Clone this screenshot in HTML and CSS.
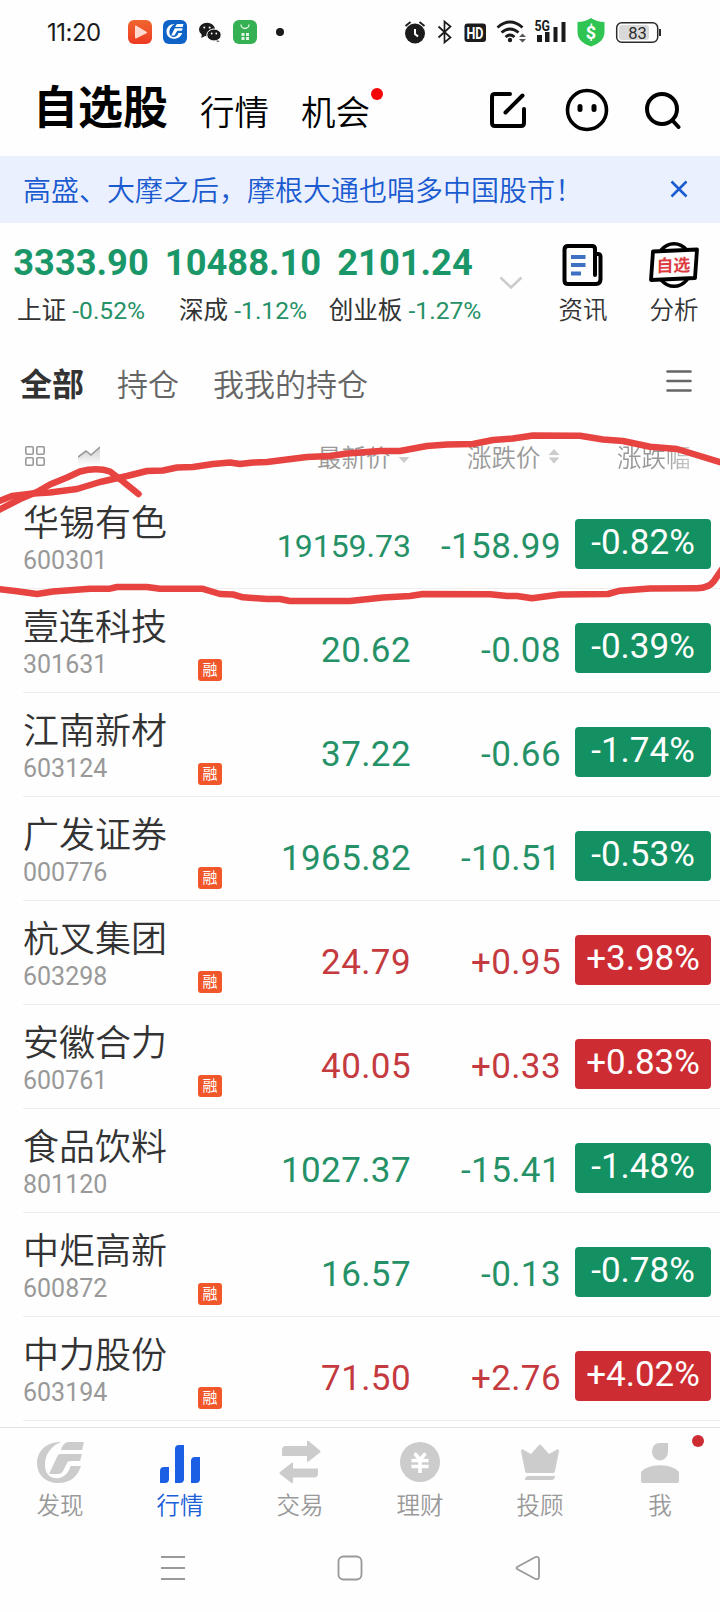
FILE: index.html
```html
<!DOCTYPE html>
<html lang="zh-CN">
<head>
  <meta charset="UTF-8" />
  <title>自选股</title>
  <link rel="stylesheet" href="styles.css">
</head>
<body>
  <div class="status-bar">
    <span class="time">11:20</span>
    <div class="app-icons">
      <svg width="24" height="24" viewBox="0 0 24 24"><defs><linearGradient id="gr" x2="0" y2="1"><stop stop-color="#f0662f"/><stop offset="1" stop-color="#ee3a22"/></linearGradient></defs><rect width="24" height="24" rx="6" fill="url(#gr)"/><path d="M7 6.500v11q0 1.500 1.500.8l10-5q1.300-.8 0-1.600l-10-6Q7 5.200 7 6.500z" fill="#ffd9cf"/></svg>
      <svg width="24" height="24" viewBox="0 0 24 24"><rect width="24" height="24" rx="6" fill="#0f63c6"/><g transform="translate(3.500 4) scale(.36)" fill="#fff"><path d="M24 0C8 0 0 10 0 21c0 12 9 20 20 20 14 0 21-8 24-16H33c-1 5-4 9-11 11-8 1-14-4-14-13C8 12 15 4 24 0z"/><path d="M29 0h18l-2 8H24z"/><path d="M23 12h22l-2 7H30l-8 13h-9z"/></g></svg>
      <svg width="24" height="24" viewBox="0 0 24 24"><ellipse cx="9" cy="9.500" rx="8" ry="6.700" fill="#1b1b1b"/><path d="M4 14l-.8 4 4-2zM19 19l2.500 3-4-1z" fill="#1b1b1b"/><ellipse cx="16" cy="15" rx="7.200" ry="6" fill="#1b1b1b" stroke="#fff"/><g fill="#fff"><circle cx="6.300" cy="7.500" r="1"/><circle cx="11.600" cy="7.500" r="1"/><circle cx="13.700" cy="13.500" r=".9"/><circle cx="18.300" cy="13.500" r=".9"/></g></svg>
      <svg width="24" height="24" viewBox="0 0 24 24"><rect width="24" height="24" rx="6" fill="#35b053"/><path d="M8 4.500a4 4 0 0 0 8 0" fill="none" stroke="#dff5e4" stroke-width="1.400"/><path d="M8.500 13h3v3h-3zM13 13h3v3h-3zM8.500 17h3v3h-3zM13 17h3v3h-3z" fill="#dff5e4"/></svg>
    </div>
    <span class="more-dot"></span>
    <svg class="sys-icons" width="260" height="32" viewBox="402 16 260 32">
      <g fill="#1b1b1b">
        <circle cx="416" cy="33.500" r="10"/>
        <path d="M416 29v5l3 2.500" fill="none" stroke="#fff" stroke-width="2"/>
        <path d="M406.500 26l5-4M425.500 26l-5-4" stroke="#1b1b1b" stroke-width="1.800"/>
        <path d="M439.500 26.500l12 11-6 5V21.500l6 5-12 11" fill="none" stroke="#1b1b1b" stroke-width="1.700"/>
        <rect x="465.500" y="23.500" width="21.500" height="18.500" rx="3"/>
        <g fill="none" stroke="#1b1b1b" stroke-width="2.800"><path d="M498.500 27.500q12.500-11 25 0M502.500 32.500q8.500-7 17 0M506.500 37q4.500-4 9 0"/></g>
        <circle cx="511" cy="40" r="2.200"/>
        <path d="M520 37l3.500-3.500 3.500 3.500zM520 39l3.500 3.500 3.500-3.500z" fill="#555"/>
        <path d="M538 35h5v7h-5zM546 32h4.500v10H546zM554.500 27h4v15h-4zM562.500 22h4v20h-4z"/>
      </g>
      <text x="467.500" y="38.500" font-size="16" font-weight="700" fill="#fff" textLength="17" lengthAdjust="spacingAndGlyphs">HD</text>
      <text x="535.500" y="31" font-size="14.500" font-weight="700" fill="#1b1b1b" textLength="15.500" lengthAdjust="spacingAndGlyphs">5G</text>
      <path d="M592 18q6 4 13.500 4V32q0 10-13.500 14.500Q578.500 42 578.500 32V22Q586 22 592 18z" fill="#30c552"/>
      <text x="592" y="39" font-size="18" font-weight="700" fill="#fff" text-anchor="middle">$</text>
      <rect x="617.700" y="22.700" width="41" height="19.500" rx="5" fill="#fff" stroke="#2b2b2b" stroke-width="1.500"/>
      <rect x="620" y="25" width="30" height="15" rx="3" fill="#d9d9d9"/>
      <path d="M661 29v7" stroke="#2b2b2b" stroke-width="2"/>
      <text x="638.500" y="38.500" font-size="16.500" fill="#2b2b2b" text-anchor="middle">83</text>
    </svg>
  </div>

  <header class="header">
    <h1>自选股</h1>
    <span class="head-link">行情</span>
    <span class="head-link">机会<i class="red-dot"></i></span>
    <div class="head-icons">
      <svg width="36" height="36" viewBox="0 0 36 36" fill="none" stroke="#000" stroke-width="4" stroke-linecap="round"><path d="M20 2H5Q2 2 2 5v26q0 3 3 3h26q3 0 3-3V17M15.500 20.500L32.500 3.500"/></svg>
      <svg width="44" height="44" viewBox="0 0 44 44"><circle cx="22" cy="22" r="19.500" fill="none" stroke="#000" stroke-width="3.600"/><rect x="12.500" y="16" width="5" height="8" rx="2.500"/><rect x="26.500" y="16" width="5" height="8" rx="2.500"/></svg>
      <svg class="search" width="38" height="38" viewBox="0 0 38 38" fill="none" stroke="#000" stroke-width="4" stroke-linecap="round"><circle cx="18" cy="18" r="15"/><path d="M28.500 29.500l6 6.500"/></svg>
    </div>
  </header>

  <div class="notice">
    <span>高盛、大摩之后，摩根大通也唱多中国股市！</span>
    <svg width="18" height="18" viewBox="0 0 18 18" stroke="#1a5bd0" stroke-width="2.600"><path d="M1.500 1.500l15 15M16.500 1.500l-15 15"/></svg>
  </div>

  <section class="market">
    <div class="index">
      <strong>3333.90</strong>
      <p>上证 <em>-0.52%</em></p>
    </div>
    <div class="index">
      <strong>10488.10</strong>
      <p>深成 <em>-1.12%</em></p>
    </div>
    <div class="index">
      <strong>2101.24</strong>
      <p>创业板 <em>-1.27%</em></p>
    </div>
    <svg class="chevron" width="24" height="14" viewBox="0 0 24 14" fill="none" stroke="#ccc" stroke-width="2.600"><path d="M1.500 1.500L12 11.500l10.500-10"/></svg>
    <div class="tool">
      <svg width="50" height="46" viewBox="0 0 50 46"><path d="M37 12h3q2.500 0 2.500 3v18M37 12v21M37 12V7q0-3-3-3H10Q6.500 4 6.500 7.500v31Q6.500 42 10 42h28q4.500 0 4.500-5v-6" fill="none" stroke="#000" stroke-width="4" stroke-linecap="round"/><path d="M13 15h14.500M13 23h14.500M13 31.500h10" stroke="#3e70c4" stroke-width="4.200"/></svg>
      <span>资讯</span>
    </div>
    <div class="tool">
      <svg width="50" height="46" viewBox="0 0 50 46"><ellipse cx="25" cy="23" rx="18" ry="21.300" fill="#fff" stroke="#000" stroke-width="3.400"/><path d="M4 9.500L48 7.500 46 36 2 38z" fill="#fff" stroke="#000" stroke-width="3.800" stroke-linejoin="round"/><text x="25.500" y="29.500" class="stamp" text-anchor="middle" transform="rotate(-2 25 23) skewX(-3)">自选</text></svg>
      <span>分析</span>
    </div>
  </section>

  <nav class="groups">
    <span class="active">全部</span>
    <span>持仓</span>
    <span>我我的持仓</span>
    <svg width="26" height="22" viewBox="0 0 26 22" stroke="#666" stroke-width="2.600" stroke-linecap="round"><path d="M1.500 1.500h23M1.500 11h23M1.500 20.500h23"/></svg>
  </nav>

  <div class="columns">
    <svg width="20" height="20" viewBox="0 0 20 20" fill="none" stroke="#999" stroke-width="1.600"><rect x=".8" y=".8" width="7.400" height="7.400" rx="1"/><rect x="11.800" y=".8" width="7.400" height="7.400" rx="1"/><rect x=".8" y="11.800" width="7.400" height="7.400" rx="1"/><rect x="11.800" y="11.800" width="7.400" height="7.400" rx="1"/></svg>
    <svg class="trend" width="22" height="20" viewBox="0 0 22 20"><defs><linearGradient id="fade" x2="0" y2="1"><stop stop-color="#ccc"/><stop offset="1" stop-color="#fff"/></linearGradient></defs><path d="M0 11l8-6 5 4 9-8v19H0z" fill="url(#fade)"/><path d="M0 11l8-6 5 4 9-8" fill="none" stroke="#999" stroke-width="1.600"/></svg>
    <span class="col-price">最新价<svg width="12" height="16" viewBox="0 0 12 16"><path d="M.5 9h11L6 15z" fill="#ccc"/></svg></span>
    <span class="col-change">涨跌价<svg width="12" height="16" viewBox="0 0 12 16" fill="#ccc"><path d="M.5 7h11L6 1zM.5 9.500h11L6 15.500z"/></svg></span>
    <span class="col-pct">涨跌幅</span>
  </div>

  <main class="stocks">
    <div class="stock down">
      <div class="name">华锡有色<small>600301</small></div>
      <span class="tag none"></span><span class="price long">19159.73</span><span class="change">-158.99</span><span class="pct">-0.82%</span>
    </div>
    <div class="stock down">
      <div class="name">壹连科技<small>301631</small></div>
      <span class="tag">融</span><span class="price">20.62</span><span class="change">-0.08</span><span class="pct">-0.39%</span>
    </div>
    <div class="stock down">
      <div class="name">江南新材<small>603124</small></div>
      <span class="tag">融</span><span class="price">37.22</span><span class="change">-0.66</span><span class="pct">-1.74%</span>
    </div>
    <div class="stock down">
      <div class="name">广发证券<small>000776</small></div>
      <span class="tag">融</span><span class="price">1965.82</span><span class="change">-10.51</span><span class="pct">-0.53%</span>
    </div>
    <div class="stock up">
      <div class="name">杭叉集团<small>603298</small></div>
      <span class="tag">融</span><span class="price">24.79</span><span class="change">+0.95</span><span class="pct">+3.98%</span>
    </div>
    <div class="stock up">
      <div class="name">安徽合力<small>600761</small></div>
      <span class="tag">融</span><span class="price">40.05</span><span class="change">+0.33</span><span class="pct">+0.83%</span>
    </div>
    <div class="stock down">
      <div class="name">食品饮料<small>801120</small></div>
      <span class="tag none"></span><span class="price">1027.37</span><span class="change">-15.41</span><span class="pct">-1.48%</span>
    </div>
    <div class="stock down">
      <div class="name">中炬高新<small>600872</small></div>
      <span class="tag">融</span><span class="price">16.57</span><span class="change">-0.13</span><span class="pct">-0.78%</span>
    </div>
    <div class="stock up">
      <div class="name">中力股份<small>603194</small></div>
      <span class="tag">融</span><span class="price">71.50</span><span class="change">+2.76</span><span class="pct">+4.02%</span>
    </div>
  </main>

  <nav class="tabbar">
    <div class="tab">
      <svg width="48" height="44" viewBox="0 0 48 44"><path d="M25 1C9 1 1 11 1 22c0 12 9 20 21 20 14 0 20-8 23-17H34.500c-1.500 6-5 10-11 12-9 1.500-14.500-4-14.500-13C9 13 15 5 25 1z"/><path d="M33 1h15l-2 8H25q2-8 8-8z"/><path d="M25 13h21l-2 7H34q-2 0-3 2l-4 8q-1.500 3-5 3h-9l8-17q1-3 4-3z"/></svg>
      <span>发现</span>
    </div>
    <div class="tab active">
      <svg width="48" height="44" viewBox="0 0 48 44"><path d="M4 42V30q0-4 4-4h5v12q0 4-4 4zM19 42V8q0-4 4-4h5v34q0 4-4 4zM35 42V20q0-4 4-4h5v22q0 4-4 4z"/></svg>
      <span>行情</span>
    </div>
    <div class="tab">
      <svg width="48" height="44" viewBox="0 0 48 44"><path d="M6 14V9q0-4 4-4h21V0.500q0-1.500 1.500-.5L44 9.500q1 1 0 2L32.500 20.500q-1.500 1-1.500-.5v-5H6zM42 27.500v5q0 4-4 4H17V41q0 2-1.500 1L4 33q-1-1 0-2l11.500-9q1.500-1 1.500.5v5z"/></svg>
      <span>交易</span>
    </div>
    <div class="tab">
      <svg width="48" height="44" viewBox="0 0 48 44"><circle cx="24" cy="21" r="20"/><path d="M18.500 12.500q3 2.500 5.500 6.500 3-4 5.500-6.500M15.500 19.500h17M15.500 25.500h17M24 18v14" fill="none" stroke="#fff" stroke-width="3.600"/></svg>
      <span>理财</span>
    </div>
    <div class="tab">
      <svg width="48" height="44" viewBox="0 0 48 44"><path d="M5 10q0-2.500 2-1.500l8 4.500 8-9q1-1 2 0l8 9 8-4.500q2-1 2 1.500l-4 20q-.5 2-2 2H11q-2 0-2-2zM13 35h26q0 4-4 4H9q0-4 4-4z"/></svg>
      <span>投顾</span>
    </div>
    <div class="tab">
      <svg width="48" height="44" viewBox="0 0 48 44"><path d="M32 2v9a8 8.500 0 1 1-16 0q0-9 8-9zM5 42V31q3-4 11-6 8-1.500 16 0 8 2 11 6v9q0 2-2 2H7q-2 0-2-2z"/></svg>
      <span>我</span>
      <i class="tab-dot"></i>
    </div>
  </nav>

  <div class="sys-nav">
    <svg width="24" height="26" viewBox="0 0 24 26"><path d="M0 2h24M0 13h24M0 24h24"/></svg>
    <svg width="26" height="26" viewBox="0 0 26 26"><rect x="1.500" y="1.500" width="23" height="23" rx="5"/></svg>
    <svg width="26" height="26" viewBox="0 0 26 26"><path d="M3 11.500L20.500 2Q24 1 24 4.500v17Q24 25 20.500 24L3 14.500Q0 13 3 11.500z"/></svg>
  </div>

  <!-- hand-drawn circle round the first stock -->
  <svg class="marker" width="720" height="200" viewBox="0 420 720 200">
    <path d="M-3 502L12 496 33 493.500 50 492.500 77 489 100 482 127 476 147 471 163 470.500 177 467.500 193 467 213 464 230 462.500 240 464 253 462.500 267 462 307 457 330 456 347 453.500 380 451 400 451 427 446 447 444.500 473 444 493 440 513 438.500 533 435.500 580 435.700 603 439.500 623 441 650 446.700 677 449 723 463"/>
    <path d="M-3 511L20 499 37 492 50 484.500 67 477.500 80 471.500Q97 467 110 471.500L123 481.500 138.500 494"/>
    <path d="M-3 589L17 591.300 37 594 53 591.500 90 588.700 110 588.700 117 587 147 587 160 588.700 202 588.700 220 594 233 594.500 243 597.300 267 599 280 599 290 601 350 601 383 597.500 410 596 423 594 490 594.300 507 596 517 596 532 598.300 560 594.500 608 594 620 590.700 650 588.500 697 588.300Q709 588 714 581L723 568"/>
  </svg>
</body>
</html>
```
FILE: styles.css
```css
* {
  box-sizing: border-box;
}
body {
  position: relative;
  margin: 0;
  width: 720px;
  height: 1612px;
  overflow: hidden;
  background: #fefefe;
  color: #333;
  font-family: Roboto, "Noto Sans CJK SC", sans-serif;
}
svg {
  display: block;
  flex: none;
}
.status-bar {
  display: flex;
  align-items: center;
  height: 64px;
  padding-left: 47px;
}
.time {
  width: 81px;
  font-family: Inter, sans-serif;
  font-size: 24px;
  letter-spacing: -0.5px;
  color: #1b1b1b;
}
.app-icons {
  display: flex;
  gap: 11px;
}
.more-dot {
  width: 8px;
  height: 8px;
  margin-left: 19px;
  border-radius: 50%;
  background: #1b1b1b;
}
.sys-icons {
  margin-left: 117px;
}
.header {
  display: flex;
  align-items: center;
  height: 92px;
  padding: 0 38px 0 33px;
  color: #000;
}
h1 {
  margin: 0 32px 0 0;
  font-size: 45px;
  line-height: 60px;
  padding-bottom: 2px;
}
.head-link {
  position: relative;
  margin-right: 32px;
  padding-top: 5px;
  font-size: 34.5px;
  font-weight: 350;
  line-height: 50px;
}
.red-dot {
  position: absolute;
  top: 5px;
  right: -13px;
  width: 12px;
  height: 12px;
  border-radius: 50%;
  background: #f50505;
}
.head-icons {
  display: flex;
  align-items: center;
  gap: 39px;
  margin-left: auto;
}
.search {
  margin-left: -4px;
}
.notice {
  display: flex;
  align-items: center;
  justify-content: space-between;
  height: 67px;
  padding: 0 32px 2px 23px;
  background: #eaf0fd;
  color: #1a5bd0;
  font-size: 28px;
  font-weight: 350;
}
.market {
  display: flex;
  height: 125px;
  padding-top: 19px;
}
.index {
  flex: none;
  width: 162px;
  text-align: center;
}
.index strong {
  display: block;
  font-size: 36.3px;
  line-height: 42px;
  color: #1a9768;
}
.index p {
  margin: 12px 0 0;
  font-size: 24.6px;
  line-height: 30px;
  white-space: nowrap;
}
.index em {
  font-style: normal;
  color: #269166;
}
.chevron {
  margin: 34px 35px 0 13px;
}
.tool {
  flex: none;
  width: 50px;
  margin-right: 41px;
  font-size: 24.5px;
  font-weight: 350;
  line-height: 30px;
  text-align: center;
}
.tool:last-child {
  margin-right: 0;
}
.tool span {
  display: block;
  margin-top: 8px;
}
.stamp {
  font-size: 17px;
  font-weight: 700;
  fill: #dc3b40;
}
.groups {
  display: flex;
  align-items: center;
  height: 76px;
  padding: 0 28px 8px 20px;
  font-size: 31px;
  font-weight: 350;
  color: #666;
}
.groups span {
  margin-right: 34px;
}
.groups .active {
  margin-right: 33px;
  font-size: 32px;
  font-weight: 700;
  color: #333;
}
.groups svg {
  margin: -2px 0 0 auto;
}
.columns {
  display: grid;
  grid-template-columns: 53px 239px 150px 150px 1fr;
  align-items: center;
  height: 61px;
  padding: 3px 0 0 25px;
  font-size: 24.5px;
  font-weight: 350;
  color: #999;
}
.columns span {
  display: flex;
  align-items: center;
  gap: 7px;
}
.col-pct {
  -webkit-mask-image: linear-gradient(90deg, #000 45%, transparent 95%);
  mask-image: linear-gradient(90deg, #000 45%, transparent 95%);
}
.stock {
  display: grid;
  grid-template-columns: 175px 24px 189px 150px 136px;
  height: 104px;
  margin-left: 23px;
  border-bottom: 1px solid #eee;
  font-size: 35px;
}
.name {
  padding-top: 19px;
  font-size: 36px;
  font-weight: 350;
  line-height: 40px;
  color: #333;
}
.name small {
  display: block;
  margin-top: 2px;
  font-size: 25px;
  font-weight: 400;
  line-height: 30px;
  color: #999;
}
.tag {
  height: 22px;
  margin-top: 70px;
  border-radius: 3px;
  background: #f1572b;
  color: #fff;
  font-size: 15px;
  line-height: 22px;
  text-align: center;
}
.tag.none {
  visibility: hidden;
}
.price, .change {
  padding-top: 41px;
  line-height: 41px;
  text-align: right;
  letter-spacing: 0.4px;
}
.price.long {
  font-size: 32px;
  letter-spacing: 0;
}
.pct {
  height: 50px;
  margin: 34px -14px 0 14px;
  border-radius: 4px;
  color: #fff;
  line-height: 48px;
  text-align: center;
}
.down {
  color: #259167;
}
.up {
  color: #c43a3e;
}
.down .pct {
  background: #149162;
}
.up .pct {
  background: #cd2d32;
}
.tabbar {
  display: grid;
  grid-template-columns: repeat(6, 1fr);
  height: 114px;
  margin-top: 6px;
  padding-top: 13px;
  border-top: 1px solid #e2e2e2;
}
.tab {
  position: relative;
  display: flex;
  flex-direction: column;
  align-items: center;
  font-size: 23.5px;
  font-weight: 350;
  line-height: 30px;
  color: #999;
  fill: #ccc;
}
.tab span {
  margin-top: 6px;
}
.tab.active {
  color: #1a5fd8;
  fill: #1b5fe4;
}
.tab-dot {
  position: absolute;
  top: -6px;
  right: 16px;
  width: 12px;
  height: 12px;
  border-radius: 50%;
  background: #cd2d32;
}
.sys-nav {
  display: flex;
  gap: 152px;
  padding: 14px 0 0 161px;
  fill: none;
  stroke: #999;
  stroke-width: 1.8;
}
.marker {
  position: absolute;
  top: 420px;
  left: 0;
  fill: none;
  stroke: #e74341;
  stroke-width: 6.5;
  stroke-linecap: round;
  stroke-linejoin: round;
  pointer-events: none;
}
```
